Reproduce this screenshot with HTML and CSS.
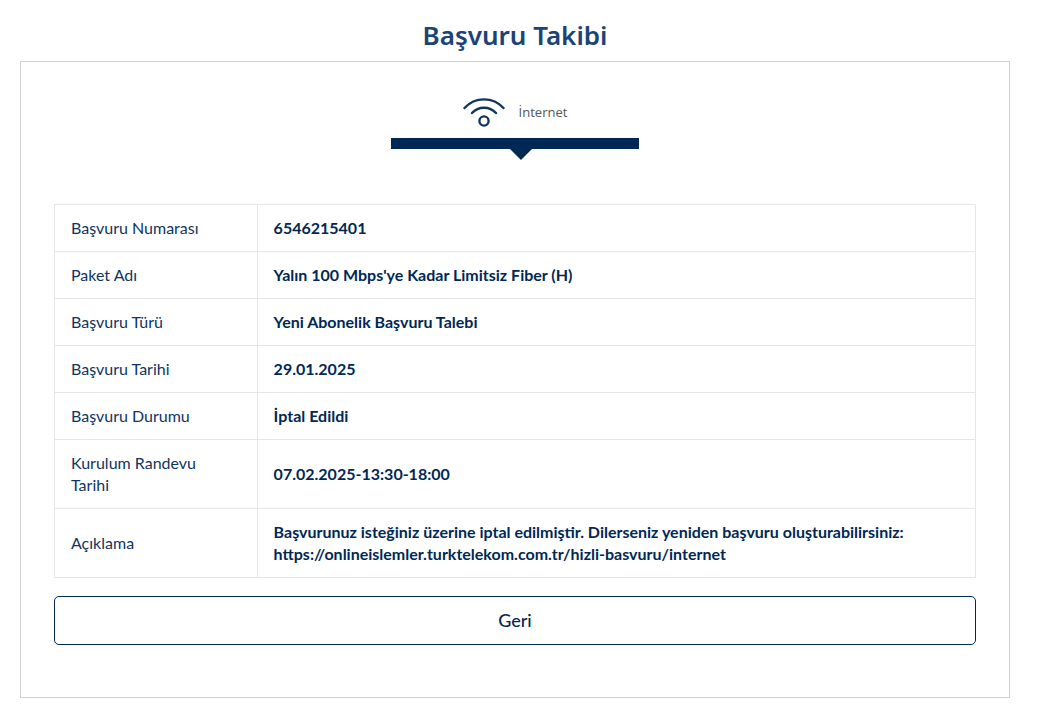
FILE: index.html
```html
<!DOCTYPE html>
<html lang="tr">
<head>
    <meta charset="UTF-8">
    <meta name="viewport" content="width=device-width, initial-scale=1.0">
    <title>Başvuru Takibi</title>
    <link rel="stylesheet" href="styles.css">
</head>
<body>

<main class="page">
    <h1 class="page-title">Başvuru Takibi</h1>

    <section class="panel">
        <div class="tabs">
            <a href="#internet" class="tab active">
                <svg class="tab-icon" viewBox="0 0 42 30" fill="none" stroke="currentColor" stroke-width="2.4" stroke-linecap="round" aria-hidden="true">
                    <path d="M1.5 11C12 -0.5 30 -0.5 40.5 11"/>
                    <path d="M9 16C15.5 9 26.5 9 33 16"/>
                    <circle cx="21" cy="24" r="4.600"/>
                </svg>
                <span class="tab-label">İnternet</span>
            </a>
        </div>

        <table class="detail-table" id="internet">
            <tbody>
                <tr>
                    <th scope="row">Başvuru Numarası</th>
                    <td>6546215401</td>
                </tr>
                <tr>
                    <th scope="row">Paket Adı</th>
                    <td>Yalın 100 Mbps'ye Kadar Limitsiz Fiber (H)</td>
                </tr>
                <tr>
                    <th scope="row">Başvuru Türü</th>
                    <td>Yeni Abonelik Başvuru Talebi</td>
                </tr>
                <tr>
                    <th scope="row">Başvuru Tarihi</th>
                    <td>29.01.2025</td>
                </tr>
                <tr>
                    <th scope="row">Başvuru Durumu</th>
                    <td>İptal Edildi</td>
                </tr>
                <tr>
                    <th scope="row">Kurulum Randevu Tarihi</th>
                    <td>07.02.2025-13:30-18:00</td>
                </tr>
                <tr>
                    <th scope="row">Açıklama</th>
                    <td>Başvurunuz isteğiniz üzerine iptal edilmiştir. Dilerseniz yeniden başvuru oluşturabilirsiniz: https://onlineislemler.turktelekom.com.tr/hizli-basvuru/internet</td>
                </tr>
            </tbody>
        </table>

        <button type="button" class="back-btn">Geri</button>
    </section>
</main>

</body>
</html>
```
FILE: styles.css
```css
body {
    margin: 0;
    background-color: #fff;
    color: #002855;
    font-family: Lato, "Noto Sans", sans-serif;
    font-size: 16px;
    line-height: 22px;
}

.page {
    padding: 16px 28px 28px 20px;
}

.page-title {
    margin: 0 0 7px;
    color: #1b4376;
    font-family: "Noto Sans", "Open Sans", sans-serif;
    font-size: 26px;
    font-weight: 600;
    line-height: 38px;
    text-align: center;
}

.panel {
    padding: 32px 33px 52px;
    border: 1px solid #d0d0d0;
}

.tabs {
    display: flex;
    justify-content: center;
    margin-bottom: 55px;
}

.tab {
    position: relative;
    display: flex;
    align-items: center;
    justify-content: center;
    gap: 14px;
    width: 27%;
    height: 36px;
    padding-bottom: 8px;
    color: #0f3561;
    text-decoration: none;
}

.tab.active {
    border-bottom: 11px solid #002855;
}

/* Arrow under the selected tab */
.tab.active::after {
    content: "";
    position: absolute;
    top: 100%;
    left: 48%;
    margin-top: 11px;
    border: 11px solid transparent;
    border-top-color: #002855;
    border-bottom: 0;
}

.tab-icon {
    width: 42px;
    height: 30px;
}

.tab-label {
    color: #555;
    font-family: "Open Sans", "Noto Sans", sans-serif;
    font-size: 13px;
}

.detail-table {
    width: 100%;
    border-collapse: collapse;
}

.detail-table th,
.detail-table td {
    padding: 12px 16px;
    border: 1px solid #e4e6e8;
    text-align: left;
    vertical-align: middle;
}

.detail-table th {
    width: 22%;
    padding-right: 32px;
    box-sizing: border-box;
    color: #0f3561;
    font-weight: 400;
}

.detail-table td {
    font-weight: 700;
}

.back-btn {
    display: block;
    width: 100%;
    margin-top: 18px;
    padding: 12px;
    border: 1px solid #002855;
    border-radius: 5px;
    background-color: #fff;
    color: #002855;
    font-family: inherit;
    font-size: 18px;
    font-weight: 500;
    line-height: 23px;
    cursor: pointer;
}
```
